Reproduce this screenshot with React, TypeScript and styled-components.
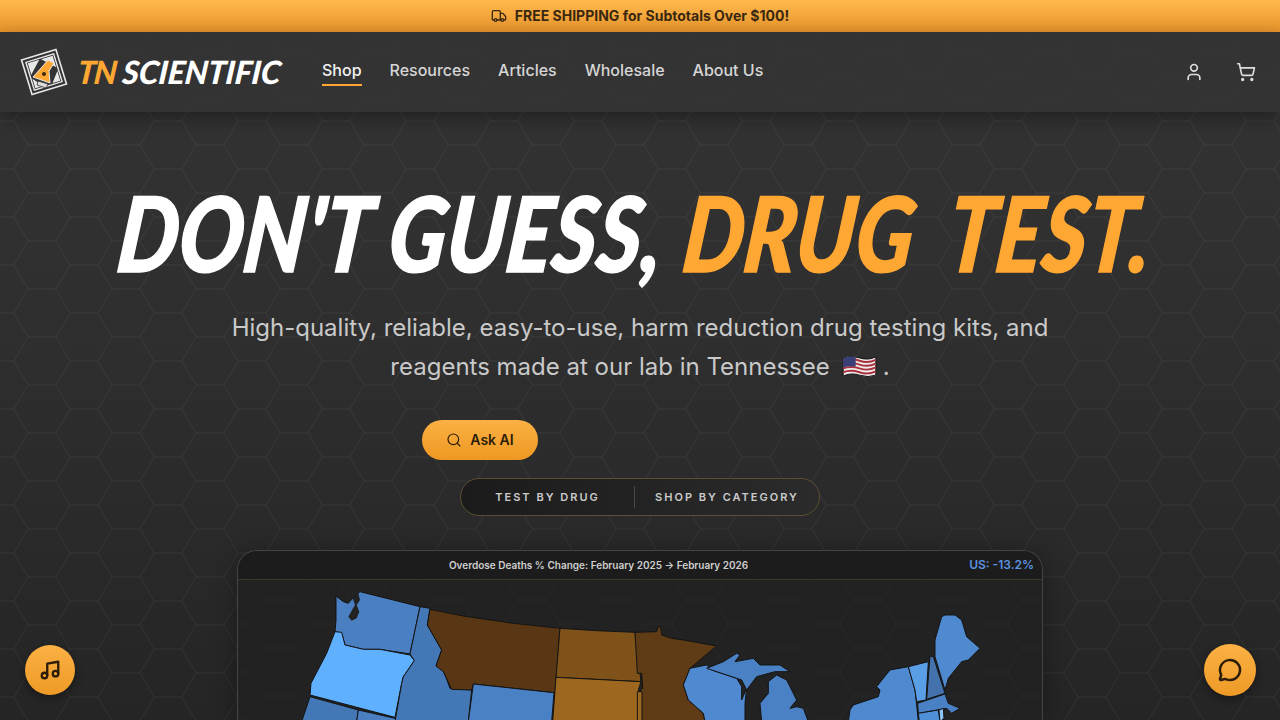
import React from "react";
import styled, { createGlobalStyle } from "styled-components";
import { Truck, User, ShoppingCart, Search, Music, MessageCircle } from "lucide-react";

const hex = (o: number) =>
  `url("data:image/svg+xml,${encodeURIComponent(
    `<svg xmlns='http://www.w3.org/2000/svg' width='84' height='48'><path d='M28 1H56L70 25H98M70 25L56 49M28 1L14 25H-14M14 25L28 49M56 1L70 -23M28 1L14 -23' fill='none' stroke='rgba(255,255,255,${o})' stroke-width='1'/></svg>`
  )}")`;

const Global = createGlobalStyle`
  html, body { margin: 0; padding: 0; height: 100%; overflow: hidden; background: #2a2a2a; }
  body { font-family: Inter, "Liberation Sans", sans-serif; }
  #root { height: 100vh; }
`;

const Page = styled.div`
  height: 720px;
  overflow: hidden;
  display: flex;
  flex-direction: column;
  background-image: ${hex(0.05)}, linear-gradient(180deg, #343434 0%, #2e2e2e 50%, #252525 100%);
`;
const Announce = styled.div`
  height: 32px;
  flex: none;
  box-sizing: border-box;
  padding-bottom: 1px;
  display: flex;
  align-items: center;
  justify-content: center;
  gap: 8px;
  background: linear-gradient(180deg, #ffb84c, #e8952c);
  color: #3a2810;
  font-size: 14px;
  font-weight: 700;
`;
const Header = styled.header`
  height: 80px;
  flex: none;
  box-sizing: border-box;
  padding: 0 24px 0 19px;
  display: flex;
  align-items: center;
  background: rgba(51, 51, 51, 0.8);
  box-shadow: 0 6px 18px rgba(0, 0, 0, 0.35);
  position: relative;
  z-index: 2;
`;
const Brand = styled.div`
  display: flex;
  align-items: center;
  gap: 9px;
  width: 303px;
  flex: none;
`;
const BrandText = styled.div`
  font-family: Lato, "Liberation Sans", sans-serif;
  font-weight: 900;
  font-style: italic;
  font-size: 32px;
  line-height: 1;
  color: #fff;
  white-space: nowrap;
  letter-spacing: -0.1px;
  transform: skewX(-6deg);
  display: flex;
  gap: 7px;
`;
const BrandAccent = styled.span`
  color: #ffa733;
  letter-spacing: -1.6px;
`;
const Nav = styled.nav`
  display: flex;
  gap: 28px;
  flex: 1;
`;
const NavLink = styled.a<{ $active?: boolean }>`
  font-size: 16px;
  font-weight: 500;
  line-height: 28px;
  color: ${(p) => (p.$active ? "#f2f2f2" : "#d6d6d6")};
  border-bottom: 2px solid ${(p) => (p.$active ? "#ffa733" : "transparent")};
  margin-top: -2px;
`;
const HeaderIcons = styled.div`
  display: flex;
  gap: 32px;
  color: #dedede;
  align-items: center;
`;
const Main = styled.main`
  flex: 1;
  display: flex;
  flex-direction: column;
  align-items: center;
  min-height: 0;
`;
const Title = styled.h1`
  margin: 70px 0 0;
  height: 100px;
  font-family: Lato, "Liberation Sans", sans-serif;
  font-weight: 900;
  font-style: italic;
  font-size: 104px;
  line-height: 100px;
  letter-spacing: 0.6px;
  color: #fff;
  -webkit-text-stroke: 1.5px currentColor;
  white-space: nowrap;
  text-transform: uppercase;
  transform: translateX(-4px) scaleX(0.82) skewX(-8deg);
`;
const TitleAccent = styled.span`
  color: #ffa733;
  margin-left: 2px;
  word-spacing: 22px;
`;
const Sub = styled.p`
  margin: 26px 0 0;
  width: 840px;
  text-align: center;
  font-size: 24px;
  line-height: 39px;
  color: #c9c9c9;
`;
const FlagIcon = styled.svg`
  width: 35px;
  height: 23px;
  vertical-align: -3px;
  margin: 0 6px 0 12px;
`;
const AskRow = styled.div`
  width: 816px;
  margin-top: 34px;
  padding-left: 190px;
  box-sizing: border-box;
`;
const AskButton = styled.button`
  width: 116px;
  height: 40px;
  border: 0;
  border-radius: 20px;
  display: flex;
  align-items: center;
  justify-content: center;
  gap: 8px;
  background: linear-gradient(180deg, #fbb144, #ee9822);
  color: #2c1d0a;
  font: 600 14px Inter, sans-serif;
  padding: 0 0 1px;
`;
const Toggle = styled.div`
  margin-top: 18px;
  width: 360px;
  height: 40px;
  box-sizing: border-box;
  border: 1px solid #5c4d33;
  border-radius: 20px;
  background: linear-gradient(90deg, #1b1b1b, #2b2b2b);
  display: flex;
  align-items: center;
`;
const ToggleItem = styled.div<{ $w: number }>`
  width: ${(p) => p.$w}px;
  text-align: center;
  flex: none;
  font-size: 11px;
  font-weight: 600;
  letter-spacing: 2px;
  color: #cbcbcb;
  white-space: nowrap;
`;
const ToggleDivider = styled.div`
  width: 1px;
  height: 22px;
  background: #4a4a4a;
  flex: none;
`;
const Card = styled.section`
  margin-top: 34px;
  width: 806px;
  flex: none;
  box-sizing: border-box;
  height: 170px;
  border: 1px solid #454545;
  border-bottom: 0;
  border-radius: 20px 20px 0 0;
  overflow: hidden;
  background-image: ${hex(0.02)}, linear-gradient(#222, #222);
  box-shadow: 0 4px 24px rgba(0, 0, 0, 0.35);
`;
const CardHead = styled.div`
  height: 29px;
  box-sizing: border-box;
  background: #1c1c1c;
  border-bottom: 1px solid #40372c;
  display: grid;
  grid-template-columns: 1fr auto;
  align-items: center;
  padding: 0 8px 1px 0;
`;
const CardTitle = styled.div`
  font-size: 10px;
  font-weight: 600;
  color: #cfcfcf;
  text-align: center;
  padding-right: 10px;
  white-space: nowrap;
`;
const CardStat = styled.div`
  font-size: 12px;
  font-weight: 600;
  color: #5b93e0;
`;
const MapSvg = styled.svg`
  display: block;
  width: 804px;
  height: 142px;
`;
const Fab = styled.button<{ $size: number; $side: "left" | "right"; $off: number }>`
  position: fixed;
  ${(p) => p.$side}: ${(p) => p.$off}px;
  bottom: ${(p) => 50 - p.$size / 2}px;
  width: ${(p) => p.$size}px;
  height: ${(p) => p.$size}px;
  border-radius: 50%;
  border: 0;
  padding: 0;
  display: flex;
  align-items: center;
  justify-content: center;
  color: #2c1d0a;
  background: linear-gradient(180deg, #fbb144, #ee9a26);
  box-shadow: 0 3px 10px rgba(0, 0, 0, 0.4);
`;

const Z1: [string, string][] = [
  ["#4a7fc1", "318,168 340,185 355,190 368,175 390,155 570,200 540,342 450,328 400,328 345,315 335,280 315,275 318,240"],
  ["#5fb0ff", "335,277 345,315 400,328 450,328 540,345 553,362 520,410 515,430 495,532 240,465 243,430 290,340 315,275"],
  ["#4477b5", "570,200 600,205 592,255 635,330 618,378 640,390 660,445 725,450 715,545 495,545 515,430 520,410 553,362 540,342"],
  ["#5a3714", "600,208 700,228 850,250 990,265 975,458 730,432 725,450 665,448 640,395 618,378 635,330 592,255"],
  ["#7f5219", "990,265 1100,272 1215,277 1233,425 978,412"],
  ["#9e6720", "978,412 1233,425 1225,450 1237,470 1237,545 968,545"],
  ["#4a80c4", "730,432 972,458 965,545 715,545"],
  ["#4477b5", "240,470 385,510 380,545 215,545"],
  ["#4a7fc1", "385,510 495,535 500,545 380,545"],
];
const Z2: [string, string][] = [
  ["#5f3c15", "-15,277 50,275 55,260 62,262 65,285 95,295 130,300 230,318 150,385 130,435 145,480 190,520 195,545 -5,545 -2,455 8,445 5,400 -8,400"],
  ["#9e6720", "-8,455 6,455 6,545 -8,545"],
  ["#4f8ad0", "150,385 200,375 215,390 290,415 305,440 305,480 320,445 315,490 315,545 195,545 190,520 145,480 130,435"],
  ["#4a80c4", "200,385 250,365 290,340 300,345 285,365 340,355 360,375 420,375 450,395 405,395 350,410 320,450 305,420 290,415 215,390"],
  ["#4a80c4", "365,545 360,490 385,460 385,425 410,405 440,420 470,480 450,505 470,500 490,505 505,545"],
  ["#4f8ad0", "630,510 640,495 715,470 720,450 710,440 750,390 805,380 825,450 830,495 835,545 625,545"],
  ["#5a9fe6", "805,380 865,365 858,480 830,485 825,450"],
  ["#4472ad", "870,348 880,350 915,460 860,478"],
  ["#4f8ad0", "885,350 885,300 905,230 915,225 945,225 965,240 980,290 1020,325 985,360 965,365 925,415 915,450"],
  ["#4a80c4", "833,490 915,462 925,490 960,505 935,520 920,505 835,520"],
  ["#4f8fd8", "835,520 895,510 900,545 838,545"],
  ["#8cc4f5", "897,510 910,505 912,535 900,545"],
];

const App = () => (
  <Page>
    <Global />
    <Announce>
      <Truck size={16} strokeWidth={2} />
      <span>FREE SHIPPING for Subtotals Over $100!</span>
    </Announce>
    <Header>
      <Brand>
        <svg width="50" height="50" viewBox="0 0 50 50" aria-hidden="true">
          <g transform="rotate(-17 25 25)">
            <rect x="7" y="7" width="36" height="36" fill="#333" stroke="#e8e8e8" strokeWidth="1.6" />
            <rect x="10.5" y="10.5" width="29" height="29" fill="#333" stroke="#e8e8e8" strokeWidth="1.4" />
            <path d="M12 12H24L12 24ZM38 12V24L26 12ZM12 38V28L20 38ZM38 38H30L38 28Z" fill="#e8e8e8" />
          </g>
          <path d="M29 13L35 16L30 24L31 36L14 30L23 20Z" fill="#ffa733" stroke="#e8e8e8" strokeWidth="1" />
          <circle cx="25" cy="27" r="2" fill="#3a2810" />
          <path d="M19 34L29 37L27 41L18 38Z" fill="#ddd" stroke="#333" strokeWidth=".8" />
        </svg>
        <BrandText>
          <BrandAccent>TN</BrandAccent>
          <span>SCIENTIFIC</span>
        </BrandText>
      </Brand>
      <Nav>
        <NavLink $active>Shop</NavLink>
        <NavLink>Resources</NavLink>
        <NavLink>Articles</NavLink>
        <NavLink>Wholesale</NavLink>
        <NavLink>About Us</NavLink>
      </Nav>
      <HeaderIcons>
        <User size={20} strokeWidth={2} />
        <ShoppingCart size={20} strokeWidth={2} />
      </HeaderIcons>
    </Header>
    <Main>
      <Title>
        Don't Guess, <TitleAccent>Drug Test.</TitleAccent>
      </Title>
      <Sub>
        High-quality, reliable, easy-to-use, harm reduction drug testing kits, and reagents made at our lab in Tennessee
        <FlagIcon viewBox="0 0 36 24" aria-hidden="true">
          <path d="M1 3Q9 0 18 3T35 2V21Q27 24 18 21T1 22Z" fill="#f1ecec" stroke="#111" strokeWidth="1" />
          <path d="M1 6Q9 3 18 6T35 5M1 10Q9 7 18 10T35 9M1 14Q9 11 18 14T35 13M1 18Q9 15 18 18T35 17" fill="none" stroke="#a8333f" strokeWidth="2" />
          <path d="M1 3Q7 1 14 2V12Q7 11 1 13Z" fill="#3b3f78" />
        </FlagIcon>
        .
      </Sub>
      <AskRow>
        <AskButton>
          <Search size={16} strokeWidth={1.75} />
          Ask AI
        </AskButton>
      </AskRow>
      <Toggle>
        <ToggleItem $w={173}>TEST BY DRUG</ToggleItem>
        <ToggleDivider />
        <ToggleItem $w={184}>SHOP BY CATEGORY</ToggleItem>
      </Toggle>
      <Card>
        <CardHead>
          <CardTitle>Overdose Deaths % Change: February 2025 → February 2026</CardTitle>
          <CardStat>US: -13.2%</CardStat>
        </CardHead>
        <MapSvg viewBox="238 580 804 142" aria-hidden="true">
          <g transform="translate(230 540) scale(0.33333)">
            {Z1.map(([f, p]) => (
              <polygon key={p} points={p} fill={f} stroke="#141414" strokeWidth="3" strokeLinejoin="round" />
            ))}
            <polygon points="385,160 390,180 380,195 388,215 380,235 365,242 355,230 365,212 375,195 368,175" fill="#222" />
          </g>
          <g transform="translate(640 540) scale(0.33333)">
            {Z2.map(([f, p]) => (
              <polygon key={p} points={p} fill={f} stroke="#141414" strokeWidth="3" strokeLinejoin="round" />
            ))}
          </g>
        </MapSvg>
      </Card>
    </Main>
    <Fab $size={50} $side="left" $off={25}>
      <Music size={22} strokeWidth={2.5} />
    </Fab>
    <Fab $size={52} $side="right" $off={24}>
      <MessageCircle size={24} strokeWidth={2.5} />
    </Fab>
  </Page>
);

export default App;
